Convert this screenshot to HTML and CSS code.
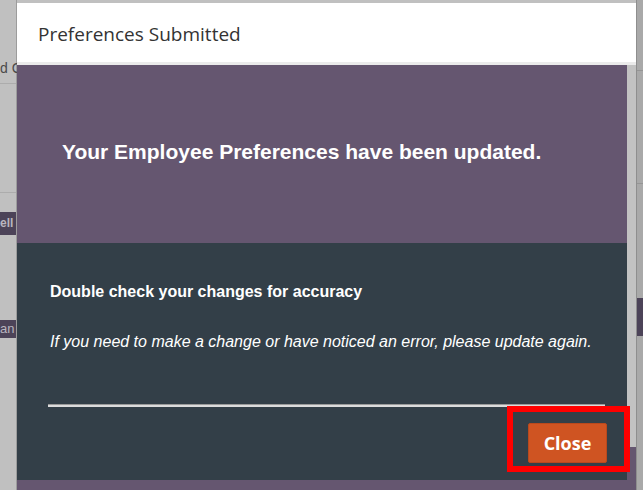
FILE: index.html
```html
<!DOCTYPE html>
<html lang="en">
<head>
<meta charset="utf-8">
<title>Preferences Submitted</title>
<link rel="stylesheet" href="styles.css">
</head>
<body>
<div class="backdrop">
  <div class="side-left">
    <div class="bg-text">d C</div>
    <div class="bg-rule rule-a"></div>
    <div class="bg-rule rule-b"></div>
    <div class="bg-bar bar-a">ell c</div>
    <div class="bg-bar bar-b">an</div>
  </div>
  <div class="center"></div>
  <div class="side-right">
    <div class="bg-rule rule-c"></div>
    <div class="bg-rule rule-d"></div>
    <div class="bg-bar bar-c"></div>
  </div>
</div>

<div class="modal">
  <div class="modal-header">
    <h1 class="modal-title">Preferences Submitted</h1>
  </div>
  <div class="modal-body">
    <div class="content">
      <div class="hero">
        <h2 class="hero-title">Your Employee Preferences have been updated.</h2>
      </div>
      <div class="panel">
        <p class="panel-title">Double check your changes for accuracy</p>
        <p class="panel-note">If you need to make a change or have noticed an error, please update again.</p>
        <div class="divider"></div>
        <div class="actions">
          <button class="btn-close" type="button">Close</button>
        </div>
      </div>
    </div>
    <div class="scrollbar"><div class="thumb"></div></div>
  </div>
  <div class="highlight"></div>
</div>
</body>
</html>
```
FILE: styles.css
```css
* { box-sizing: border-box; }

body {
  margin: 0;
  width: 643px;
  height: 490px;
  overflow: hidden;
  position: relative;
  background: #c0c0c0;
  font-family: "Liberation Sans", Arial, sans-serif;
}

.backdrop {
  display: flex;
  height: 490px;
}

.side-left {
  width: 17px;
  display: flex;
  flex-direction: column;
  border-right: 1px solid #9c9c9c;
}

.center { flex: 1; }

.side-right {
  width: 7px;
  display: flex;
  flex-direction: column;
  background: #a9a9a9;
  border-left: 1px solid #8e8e8e;
}

.bg-text {
  margin-top: 60px;
  height: 16px;
  font-size: 14px;
  line-height: 16px;
  color: #4a4a4a;
  white-space: nowrap;
}

.bg-rule { height: 1px; background: #acacac; }
.rule-a { margin-top: 7px; }
.rule-b { margin-top: 108px; }
.rule-c { margin-top: 70px; background: #959595; }
.rule-d { margin-top: 112px; background: #959595; }

.bg-bar {
  background: #4c4358;
  color: #b9b5bf;
  font-size: 12px;
  font-weight: bold;
  white-space: nowrap;
}
.bar-a { margin-top: 19px; height: 23px; line-height: 23px; }
.bar-b { margin-top: 85px; height: 18px; line-height: 18px; font-weight: normal; font-size: 13px; }
.bar-c { margin-top: 114px; height: 38px; }

.modal {
  position: absolute;
  left: 17px;
  top: 3px;
  bottom: 0;
  width: 619px;
  display: flex;
  flex-direction: column;
  background: #655670;
}

.modal-header {
  height: 62px;
  padding: 18px 0 0 21px;
  background: #ffffff;
  border-bottom: 3px solid #ebebeb;
}

.modal-title {
  margin: 0;
  font-family: "Open Sans", "Noto Sans", sans-serif;
  font-size: 19px;
  font-weight: normal;
  color: #333333;
}

.modal-body {
  flex: 1;
  display: flex;
  background: #655670;
}

.content { width: 610px; }

.hero {
  height: 178px;
  display: flex;
  align-items: center;
  padding: 0 0 4px 45px;
  background: #655670;
}

.hero-title {
  margin: 0;
  font-size: 21px;
  font-weight: bold;
  color: #ffffff;
}

.panel {
  height: 237px;
  padding: 39px 20px 18px 31px;
  background: #333f48;
  color: #ffffff;
}

.panel-title {
  margin: 0 0 0 2px;
  font-size: 16px;
  line-height: 20px;
  font-weight: bold;
}

.panel-note {
  margin: 30px 0 0 2px;
  font-size: 16px;
  line-height: 20px;
  font-style: italic;
}

.divider {
  margin: 52px 2px 0 0;
  height: 3px;
  background: #dcdcdc;
  border-top: 1px solid #9a9a9a;
}

.actions {
  display: flex;
  justify-content: flex-end;
  margin-top: 16px;
}

.btn-close {
  width: 79px;
  height: 40px;
  padding: 0;
  background: #cf5422;
  border: 1px solid #b9491d;
  border-radius: 2px;
  color: #ffffff;
  font-family: "Open Sans", "Noto Sans", sans-serif;
  font-size: 18px;
  font-weight: bold;
}

.scrollbar { width: 9px; }
.thumb { height: 382px; background: #c2c2c2; }

.highlight {
  position: absolute;
  left: 490px;
  top: 403px;
  width: 123px;
  height: 66px;
  border: 6px solid #ff0000;
}
```
